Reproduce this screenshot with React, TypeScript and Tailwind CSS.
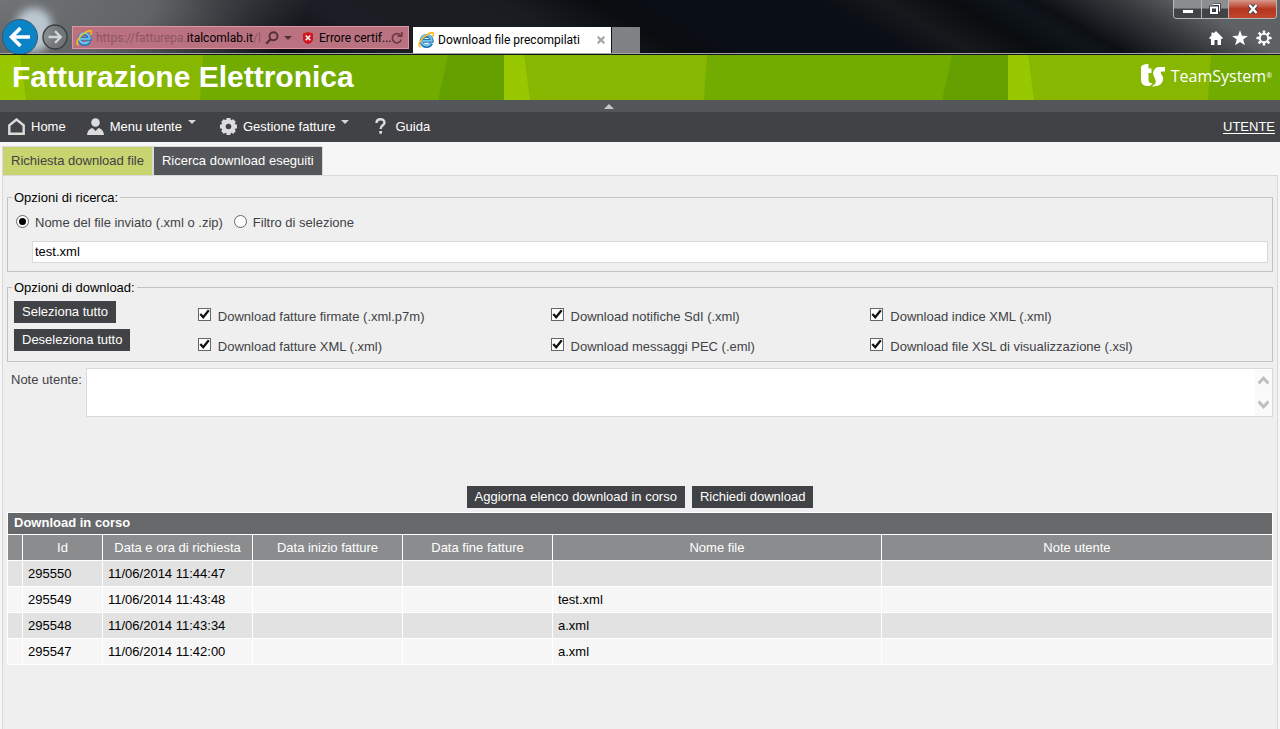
import React, { useState } from "react";

function IeLogo() {
  return (
    <svg viewBox="0 0 16 16" className="h-4 w-4 shrink-0" fill="none" aria-hidden="true">
      <path d="M13.400 11.300A5.200 5.200 0 1 1 13.900 8.900H4.500" stroke="#2577b5" strokeWidth="3.600" />
      <path d="M12.800 11.300A5.200 5.200 0 1 1 13.700 8.900H4.500" stroke="#74c5ee" strokeWidth="1.900" />
      <path d="M2.600 15C-.6 13.600 2 8.600 6 5 9.800 1.600 14.400-.4 15.300 1.200c.4.900 0 2.200-.7 3.600" stroke="#f6bb1c" strokeWidth="1.600" />
    </svg>
  );
}

function BrowserBar() {
  return (
    <header className="relative h-[55px] overflow-hidden border-b border-[#14161c] bg-[radial-gradient(ellipse_310px_120px_at_top_left,#717476_0%,#616466_50%,transparent_100%),linear-gradient(30deg,#24272a_0%,#0b0f14_13%,#0b0f14_22%,#1b1f25_29%,#191c21_43%,#090d10_50%,#0a0e15_54%,#0a0e15_66%,#15191c_71%,#090d10_76%,#10151b_80%,#0c1015_82%,#35383b_88%,#5f6265_93%,#5f6265_100%)] font-['Roboto','Open_Sans',sans-serif] text-xs">
      <div className="absolute top-2 left-4 h-11 w-9 rounded-full bg-[#c5d3dc] opacity-90 blur-xs" />
      <div className="absolute top-0 right-[3px] flex h-[19px] overflow-hidden rounded-b border border-t-0 border-[#b4b6b8]">
        <button aria-label="Riduci a icona" className="flex w-7 items-center justify-center border-r border-[#b4b6b8] bg-linear-to-b from-[#8b8d8f] from-45% to-[#414345] to-50%">
          <svg viewBox="0 0 12 5" className="mt-1 h-[5px] w-3"><rect x=".5" y=".5" width="11" height="4" fill="#fff" stroke="#44474c" /></svg>
        </button>
        <button aria-label="Ripristina" className="flex w-[27px] items-center justify-center border-r border-[#b4b6b8] bg-linear-to-b from-[#8b8d8f] from-45% to-[#414345] to-50%">
          <svg viewBox="0 0 12 12" className="h-3 w-3" fill="none">
            <path d="M4 2H10.500V8.500" stroke="#33363b" strokeWidth="3" />
            <path d="M4 1.500H10.500V8.500" stroke="#fff" strokeWidth="1.200" />
            <rect x="2" y="4.500" width="6" height="5.500" stroke="#33363b" strokeWidth="3.600" />
            <rect x="2" y="4.500" width="6" height="5.500" stroke="#fff" strokeWidth="2" />
          </svg>
        </button>
        <button aria-label="Chiudi finestra" className="flex w-[47px] items-center justify-center bg-linear-to-b from-[#d8988a] via-[#b5351f] via-50% to-[#c2452e]">
          <svg viewBox="0 0 12 12" className="h-3 w-3" fill="none">
            <path d="M2.500 2 9.500 10M9.500 2 2.500 10" stroke="#4a4450" strokeWidth="4.200" />
            <path d="M2.500 2 9.500 10M9.500 2 2.500 10" stroke="#fff" strokeWidth="2.400" />
          </svg>
        </button>
      </div>
      <div className="relative flex h-[54px] items-end border-b border-[#a3a5a7]">
        <div className="flex h-[34px] w-[72px] gap-1 pl-0.5">
          <button aria-label="Indietro" className="h-9 w-9 shrink-0">
            <svg viewBox="0 0 36 36" className="h-9 w-9" fill="none">
              <circle cx="18" cy="18" r="17.500" fill="#0a84c6" stroke="#39566a" />
              <path d="M28 18H11M18.500 9 9.500 18l9 9" stroke="#fff" strokeWidth="3.600" />
            </svg>
          </button>
          <button aria-label="Avanti" className="mt-[5px] h-[26px] w-[26px] shrink-0">
            <svg viewBox="0 0 26 26" className="h-[26px] w-[26px]" fill="none">
              <circle cx="13" cy="13" r="12" fill="#76797b" fillOpacity=".75" stroke="#3b3e41" strokeWidth="1.400" />
              <path d="M6.500 13H18M13 7.200 18.800 13 13 18.800" stroke="#d2d5d6" strokeWidth="2.400" />
            </svg>
          </button>
        </div>
        <div className="mb-1 flex h-[23px] w-[337px] items-center border border-[#e292a0] bg-[#bb7280] pl-[3px]">
          <IeLogo />
          <div role="textbox" aria-label="Indirizzo" className="ml-1 w-[165px] whitespace-nowrap text-[#8c5561]">
            https://fatturepa.<span className="text-black">italcomlab.it</span>/l
          </div>
          <button aria-label="Cerca" className="ml-1 h-3.5 w-3.5">
            <svg viewBox="0 0 14 14" className="h-3.5 w-3.5" fill="none" stroke="#503038" strokeWidth="1.900">
              <circle cx="8.500" cy="5.300" r="4" />
              <path d="M5.600 8.200 1.200 12.600" strokeWidth="2.300" />
            </svg>
          </button>
          <button aria-label="Mostra indirizzi" className="ml-[5px] flex w-2">
            <svg viewBox="0 0 8 4" className="h-1 w-2"><path d="M0 0H8L4 4z" fill="#503038" /></svg>
          </button>
          <button aria-label="Errore certificato" className="ml-[11px] flex items-center gap-1.5">
            <svg viewBox="0 0 10 12" className="h-3 w-2.5" fill="none">
              <path d="M5 0 10 1.500V8C9 10.500 7 11.500 5 12 3 11.500 1 10.500 0 8V1.500z" fill="#d2141c" />
              <path d="M2.700 3.500 7.300 8.200M7.300 3.500 2.700 8.200" stroke="#fff" strokeWidth="1.500" />
            </svg>
            <span className="w-[70px] text-left whitespace-nowrap text-black">Errore certif...</span>
          </button>
          <button aria-label="Aggiorna" className="ml-0.5 h-3 w-3">
            <svg viewBox="0 0 12 12" className="h-3 w-3" fill="none" stroke="#6b3a45" strokeWidth="1.700">
              <path d="M10 4A4.600 4.600 0 1 0 10.400 7.500" />
              <path d="M10.800 0V4.200H6.600" />
            </svg>
          </button>
        </div>
        <div className="ml-1 flex h-[26px] w-[198px] items-center bg-white pl-[5px] text-black">
          <IeLogo />
          <span className="ml-1 flex-1 whitespace-nowrap">Download file precompilati</span>
          <button aria-label="Chiudi scheda" className="mr-1.5 h-2 w-2">
            <svg viewBox="0 0 8 8" className="h-2 w-2"><path d="M.700.700 7.300 7.300M7.300.700.700 7.300" stroke="#a2a2a2" strokeWidth="2" /></svg>
          </button>
        </div>
        <button aria-label="Nuova scheda" className="ml-px h-[26px] w-7 bg-[#808284]" />
        <div className="mr-2 mb-1.5 ml-auto flex gap-2 pb-px">
          <button aria-label="Pagina iniziale" className="h-4 w-4">
            <svg viewBox="0 0 16 16" className="h-4 w-4" fill="#fff"><path d="M8 1 15 8l-1.200 1.200-.8-.7V15H9.500V10H6.500V15H3V8.500l-.8.7L1 8l2.500-2.500V2.500h2V3.600z" /></svg>
          </button>
          <button aria-label="Preferiti" className="h-4 w-4">
            <svg viewBox="0 0 16 16" className="h-4 w-4" fill="#fff"><path d="M8 .300 10 5.800 15.900 6 11.200 9.600 12.900 15.300 8 12 3.100 15.300 4.800 9.600.100 6 6 5.800z" /></svg>
          </button>
          <button aria-label="Strumenti" className="h-4 w-4">
            <svg viewBox="0 0 16 16" className="h-4 w-4" fill="none" stroke="#fff">
              <circle cx="8" cy="8" r="4.200" strokeWidth="2" />
              <path d="M8 .5V3M8 13v2.500M.5 8H3M13 8h2.500M2.700 2.700 4.500 4.500M11.500 11.500l1.800 1.800M2.700 13.300 4.500 11.500M11.500 4.500l1.800-1.800" strokeWidth="2.400" />
            </svg>
          </button>
        </div>
      </div>
    </header>
  );
}

function Banner() {
  return (
    <div className="relative flex h-[45px] items-center justify-between bg-[#86b600] pr-2 pb-0.5 pl-3 text-white">
      <svg className="absolute inset-0 h-full w-full" aria-hidden="true">
        <defs>
          <pattern id="stripes" width="504" height="45" patternUnits="userSpaceOnUse">
            <rect width="504" height="45" fill="#87b700" />
            <path d="M0 0H20L26 45H0z" fill="#98c900" />
            <path d="M203 0H504V45H200z" fill="#72ac00" />
            <path d="M448 0H504V45H438z" fill="#64a100" />
          </pattern>
        </defs>
        <rect width="100%" height="45" fill="url(#stripes)" />
      </svg>
      <h1 className="relative text-[30px] leading-[34px] font-bold">Fatturazione Elettronica</h1>
      <div className="relative flex items-center gap-1.5 pb-0.5">
        <svg viewBox="0 0 24 23" className="h-[23px] w-6" fill="#fff" role="img" aria-label="TS">
          <path d="M0 3C0 1.500 3 0 7.500 0V4.500H10.500V9H7.500V16C7.500 18.500 9 19.500 11.500 19 10.500 21.500 8 22.500 5.500 22 2 21.500 0 19 0 15.500z" />
          <path d="M24 3V7.500H20.500C19.500 7.500 19.500 9 20.500 10.500 22.500 13 22.500 15 21.500 17.500 20 21.500 15.500 22.800 10 22.300 13 21.500 14.500 20 14.800 18 15 16 13.500 14 12.500 11.500 11.500 8 13 3.500 18 3z" />
        </svg>
        <span className="font-['Open_Sans','Noto_Sans',sans-serif] text-base leading-5">TeamSystem<sup className="text-[7px]">®</sup></span>
      </div>
    </div>
  );
}

function Caret() {
  return <svg viewBox="0 0 8 4" className="mb-2 h-1 w-2" fill="#d6d6d6" aria-hidden="true"><path d="M0 0H8L4 4z" /></svg>;
}

function MainMenu() {
  return (
    <nav className="text-white">
      <button aria-label="Comprimi intestazione" className="flex h-3 w-full justify-center bg-[#555659] pt-1 pr-[62px]">
        <svg viewBox="0 0 10 5" className="h-[5px] w-2.5" fill="#c8c8c8"><path d="M0 5H10L5 0z" /></svg>
      </button>
      <div className="flex h-[30px] items-center bg-[#414245] pr-[5px] pb-0.5 pl-2">
        <a href="#home" className="flex items-center gap-1.5">
          <svg viewBox="0 0 17 17" className="h-[17px] w-[17px]" fill="none"><path d="M1.300 15.700V7.300L8.500 1.500 15.700 7.300V15.700z" stroke="#dcdcdc" strokeWidth="2.400" /></svg>
          Home
        </a>
        <a href="#utente" className="ml-[21px] flex items-center gap-1.5">
          <svg viewBox="0 0 17 17" className="h-[17px] w-[17px]" fill="#dcdcdc"><circle cx="8.500" cy="4.500" r="4.300" /><path d="M0 17C.3 13 2.500 10.800 5.500 10L8.500 13 11.500 10C14.500 10.800 16.700 13 17 17z" /></svg>
          Menu utente
          <Caret />
        </a>
        <a href="#fatture" className="ml-6 flex items-center gap-1.5">
          <svg viewBox="0 0 17 17" className="h-[17px] w-[17px]" fill="none" stroke="#dcdcdc">
            <circle cx="8.500" cy="8.500" r="5" strokeWidth="4.400" />
            <path d="M8.500 0V3M8.500 14v3M0 8.500H3M14 8.500h3M2.500 2.500l2 2M12.500 12.500l2 2M2.500 14.500l2-2M12.500 4.500l2-2" strokeWidth="4" />
          </svg>
          Gestione fatture
          <Caret />
        </a>
        <a href="#guida" className="ml-[26px] flex items-center gap-[9px]">
          <svg viewBox="0 0 11 16" className="h-4 w-[11px]" fill="none"><path d="M1.500 5C1.500 2.500 3 1.300 5.500 1.300S9.500 2.600 9.500 4.600C9.500 7.500 5.600 7.200 5.600 11" stroke="#dcdcdc" strokeWidth="2.400" /><rect x="4.300" y="13" width="2.700" height="2.700" fill="#dcdcdc" /></svg>
          Guida
        </a>
        <a href="#profilo" className="ml-auto pt-px underline underline-offset-2">UTENTE</a>
      </div>
    </nav>
  );
}

function DarkButton({ children, onClick }: { children: React.ReactNode; onClick?: () => void }) {
  return (
    <button type="button" onClick={onClick} className="h-[22px] bg-[#414245] px-2 pb-px whitespace-nowrap text-white">
      {children}
    </button>
  );
}

function Radio({ label, checked, onChange }: { label: string; checked: boolean; onChange: () => void }) {
  return (
    <label className="flex items-start gap-1.5">
      <span className="grid h-[13px] w-[13px] place-items-center">
        <input type="radio" name="ricerca" checked={checked} onChange={onChange} className="peer col-start-1 row-start-1 h-[13px] w-[13px] appearance-none rounded-full border border-[#666] bg-white" />
        <span className="pointer-events-none col-start-1 row-start-1 hidden h-[7px] w-[7px] rounded-full bg-black peer-checked:block" />
      </span>
      {label}
    </label>
  );
}

function Checkbox({ label, checked, onChange }: { label: string; checked: boolean; onChange: () => void }) {
  return (
    <label className="flex items-start gap-[7px]">
      <span className="grid h-[13px] w-[13px] place-items-center">
        <input type="checkbox" checked={checked} onChange={onChange} className="peer col-start-1 row-start-1 h-[13px] w-[13px] appearance-none border border-[#666] bg-white" />
        <svg viewBox="0 0 13 13" className="pointer-events-none col-start-1 row-start-1 hidden h-[13px] w-[13px] peer-checked:block" fill="none">
          <path d="M2.300 6 5.200 9.300 10.800 2.300" stroke="#111" strokeWidth="2.200" />
        </svg>
      </span>
      <span className="pt-px">{label}</span>
    </label>
  );
}

const options = [
  "Download fatture firmate (.xml.p7m)",
  "Download notifiche SdI (.xml)",
  "Download indice XML (.xml)",
  "Download fatture XML (.xml)",
  "Download messaggi PEC (.eml)",
  "Download file XSL di visualizzazione (.xsl)",
];

const rows = [
  { id: "295550", date: "11/06/2014 11:44:47", file: "" },
  { id: "295549", date: "11/06/2014 11:43:48", file: "test.xml" },
  { id: "295548", date: "11/06/2014 11:43:34", file: "a.xml" },
  { id: "295547", date: "11/06/2014 11:42:00", file: "a.xml" },
];

export default function App() {
  const [mode, setMode] = useState(0);
  const [fileName, setFileName] = useState("test.xml");
  const [checked, setChecked] = useState(options.map(() => true));
  const toggle = (i: number) => setChecked(checked.map((c, j) => (j === i ? !c : c)));

  return (
    <div className="flex min-h-screen flex-col bg-[#f6f6f6] font-['Liberation_Sans',Arial,sans-serif] text-[13px] leading-[15px] text-[#414245]">
      <BrowserBar />
      <Banner />
      <MainMenu />
      <div className="flex pt-1 pl-0.5" role="tablist">
        <button role="tab" aria-selected="true" className="h-[29px] border-t border-l border-[#d9d9d9] bg-[#c8d46f] px-2 pb-px">Richiesta download file</button>
        <button role="tab" aria-selected="false" className="h-[29px] border-t border-r border-l-2 border-[#d9d9d9] bg-[#555659] px-2 pb-px text-white">Ricerca download eseguiti</button>
      </div>
      <main className="mx-0.5 flex-1 border border-b-0 border-[#d9d9d9] bg-[#efefef] px-1 pt-3.5">
        <fieldset className="border border-[#c3c3c3] px-1 pb-2">
          <legend className="px-0.5 text-black">Opzioni di ricerca:</legend>
          <div className="flex gap-[11px] pt-2.5 pl-1">
            <Radio label="Nome del file inviato (.xml o .zip)" checked={mode === 0} onChange={() => setMode(0)} />
            <Radio label="Filtro di selezione" checked={mode === 1} onChange={() => setMode(1)} />
          </div>
          <div className="mt-[11px] flex pl-5">
            <input aria-label="Nome del file" value={fileName} onChange={(e) => setFileName(e.target.value)} className="h-[22px] flex-1 border border-[#d9d9d9] bg-white px-0.5 pb-px text-black" />
          </div>
        </fieldset>

        <fieldset className="mt-2 border border-[#c3c3c3] pr-1 pb-[7px] pl-1">
          <legend className="px-0.5 text-black">Opzioni di download:</legend>
          <div className="grid grid-cols-[184fr_1071fr] pt-1.5 pl-0.5">
            <div className="flex flex-col items-start gap-1.5">
              <DarkButton onClick={() => setChecked(options.map(() => true))}>Seleziona tutto</DarkButton>
              <DarkButton onClick={() => setChecked(options.map(() => false))}>Deseleziona tutto</DarkButton>
            </div>
            <div className="grid grid-cols-[353fr_320fr_398fr] content-start gap-y-3.5 pt-[7px]">
              {options.map((label, i) => (
                <Checkbox key={label} label={label} checked={checked[i]} onChange={() => toggle(i)} />
              ))}
            </div>
          </div>
        </fieldset>

        <div className="mt-1.5 flex pl-1">
          <label htmlFor="note" className="pt-1">Note utente:</label>
          <div className="relative ml-1 flex flex-1">
            <textarea id="note" className="h-[49px] flex-1 resize-none border border-[#d9d9d9] bg-white p-0.5 text-black" />
            <div className="pointer-events-none absolute inset-y-px right-px flex w-[17px] flex-col items-center justify-between bg-[#fafafa] py-[7px]">
              <svg viewBox="0 0 11 9" className="h-[9px] w-[11px]" fill="none"><path d="M.500 7.500 5.500 2.200l5 5.300" stroke="#c0c0c0" strokeWidth="3" /></svg>
              <svg viewBox="0 0 11 9" className="h-[9px] w-[11px]" fill="none"><path d="M.500 1.500 5.500 6.800l5-5.300" stroke="#c0c0c0" strokeWidth="3" /></svg>
            </div>
          </div>
        </div>

        <div className="mt-[69px] mb-1 flex justify-center gap-[7px]">
          <DarkButton>Aggiorna elenco download in corso</DarkButton>
          <DarkButton>Richiedi download</DarkButton>
        </div>

        <table className="w-full table-fixed border-collapse text-black [&_td]:h-[26px] [&_td]:border [&_td]:border-white [&_td]:px-[5px] [&_th]:border [&_th]:border-white">
          <colgroup>
            <col className="w-[15px]" />
            <col className="w-20" />
            <col className="w-[150px]" />
            <col className="w-[150px]" />
            <col className="w-[150px]" />
            <col className="w-[26%]" />
            <col />
          </colgroup>
          <thead className="text-white">
            <tr className="bg-[#676869]">
              <th colSpan={7} className="h-[22px] px-1.5 pb-0.5 text-left font-bold">Download in corso</th>
            </tr>
            <tr className="h-[26px] bg-[#8b8c8e]">
              {["", "Id", "Data e ora di richiesta", "Data inizio fatture", "Data fine fatture", "Nome file", "Note utente"].map((h) => (
                <th key={h} className="font-normal">{h}</th>
              ))}
            </tr>
          </thead>
          <tbody>
            {rows.map((r) => (
              <tr key={r.id} className="odd:bg-[#e2e2e2] even:bg-[#f6f6f6]">
                <td />
                <td>{r.id}</td>
                <td>{r.date}</td>
                <td />
                <td />
                <td>{r.file}</td>
                <td />
              </tr>
            ))}
          </tbody>
        </table>
      </main>
    </div>
  );
}
